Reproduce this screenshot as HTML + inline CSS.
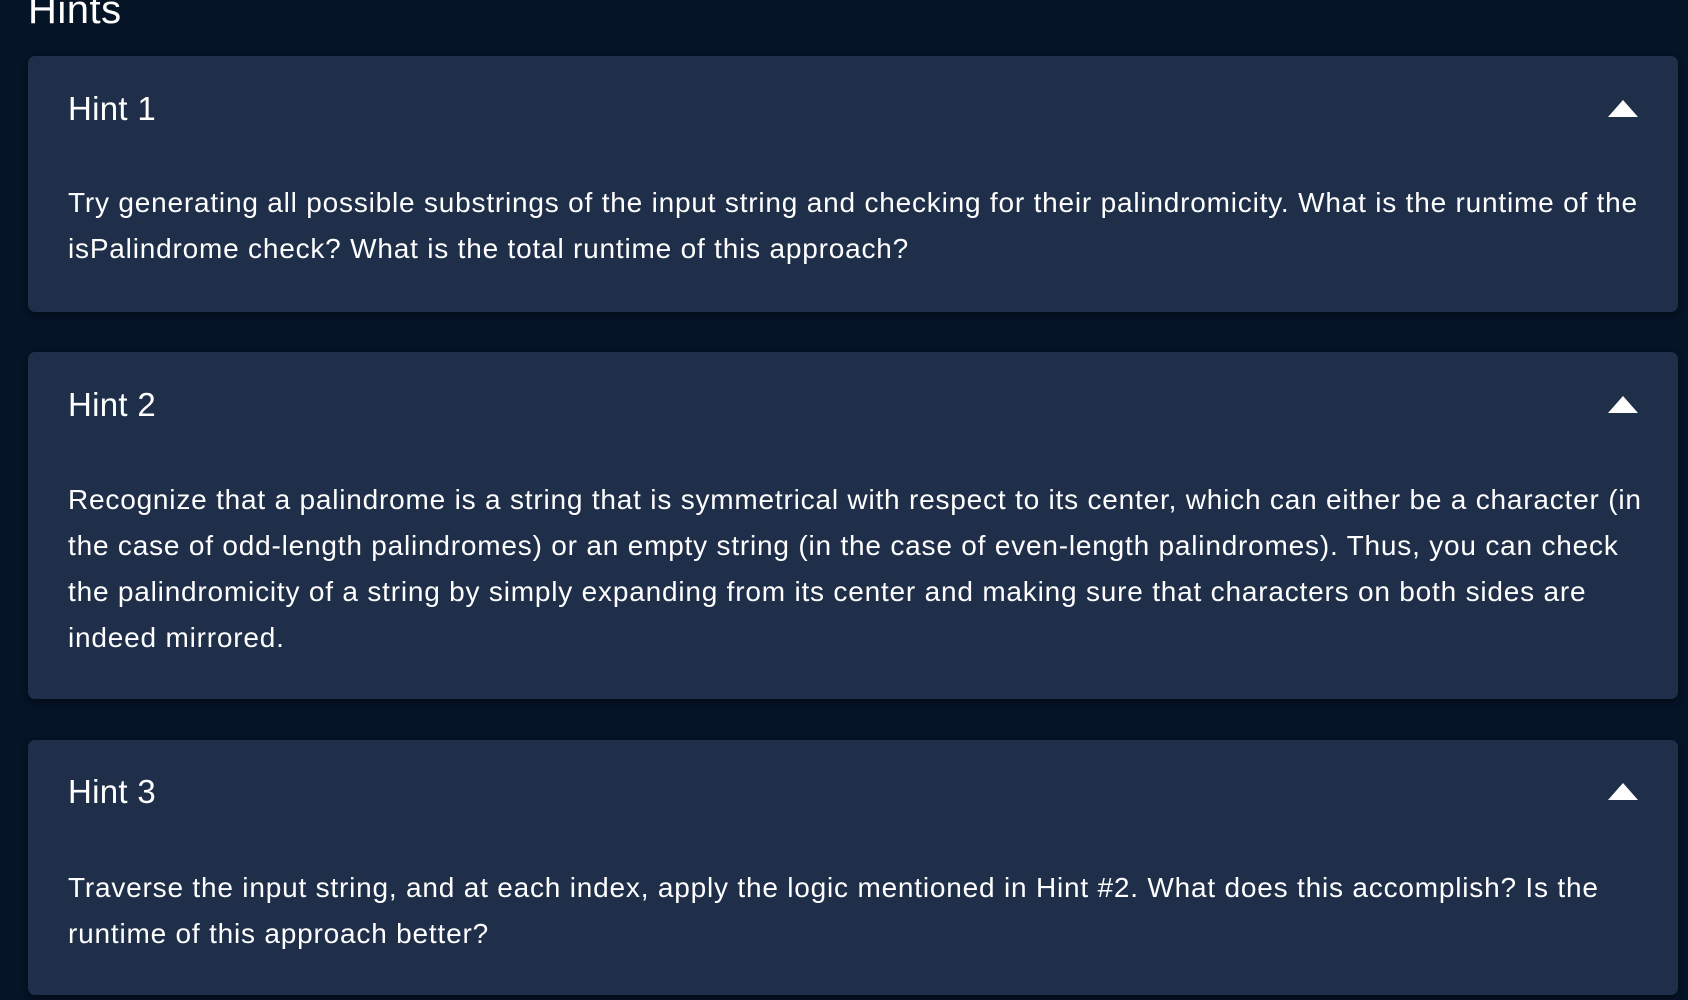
<!DOCTYPE html>
<html><head><meta charset="utf-8"><style>
html,body{margin:0;padding:0;width:1688px;height:1000px;overflow:hidden;background:#061427;font-family:"Liberation Sans","DejaVu Sans",sans-serif;color:#fff}
.h{position:absolute;left:28px;top:-12px;font-size:40px;line-height:44px;letter-spacing:0.5px}
.card{position:absolute;left:28px;width:1650px;background:#1f2f4a;border-radius:7px;box-shadow:0 3px 8px rgba(0,0,0,.45)}
.t{position:absolute;left:40px;font-size:33px;line-height:40px;letter-spacing:0.3px}
.b{position:absolute;left:40px;font-size:28px;line-height:46px;letter-spacing:0.8px;white-space:nowrap}
.a{position:absolute;left:1580px;width:0;height:0;border-left:15px solid transparent;border-right:15px solid transparent;border-bottom:17px solid #fff}
</style></head><body>
<div class="h">Hints</div>
<div class="card" style="top:56px;height:256px">
<div class="t" style="top:33px">Hint 1</div>
<div class="a" style="top:44px"></div>
<div class="b" style="top:124px">Try generating all possible substrings of the input string and checking for their palindromicity. What is the runtime of the<br>isPalindrome check? What is the total runtime of this approach?</div>
</div>
<div class="card" style="top:352px;height:347px">
<div class="t" style="top:33px">Hint 2</div>
<div class="a" style="top:44px"></div>
<div class="b" style="top:125px">Recognize that a palindrome is a string that is symmetrical with respect to its center, which can either be a character (in<br>the case of odd-length palindromes) or an empty string (in the case of even-length palindromes). Thus, you can check<br>the palindromicity of a string by simply expanding from its center and making sure that characters on both sides are<br>indeed mirrored.</div>
</div>
<div class="card" style="top:740px;height:255px">
<div class="t" style="top:32px">Hint 3</div>
<div class="a" style="top:43px"></div>
<div class="b" style="top:125px">Traverse the input string, and at each index, apply the logic mentioned in Hint #2. What does this accomplish? Is the<br>runtime of this approach better?</div>
</div>
</body></html>
